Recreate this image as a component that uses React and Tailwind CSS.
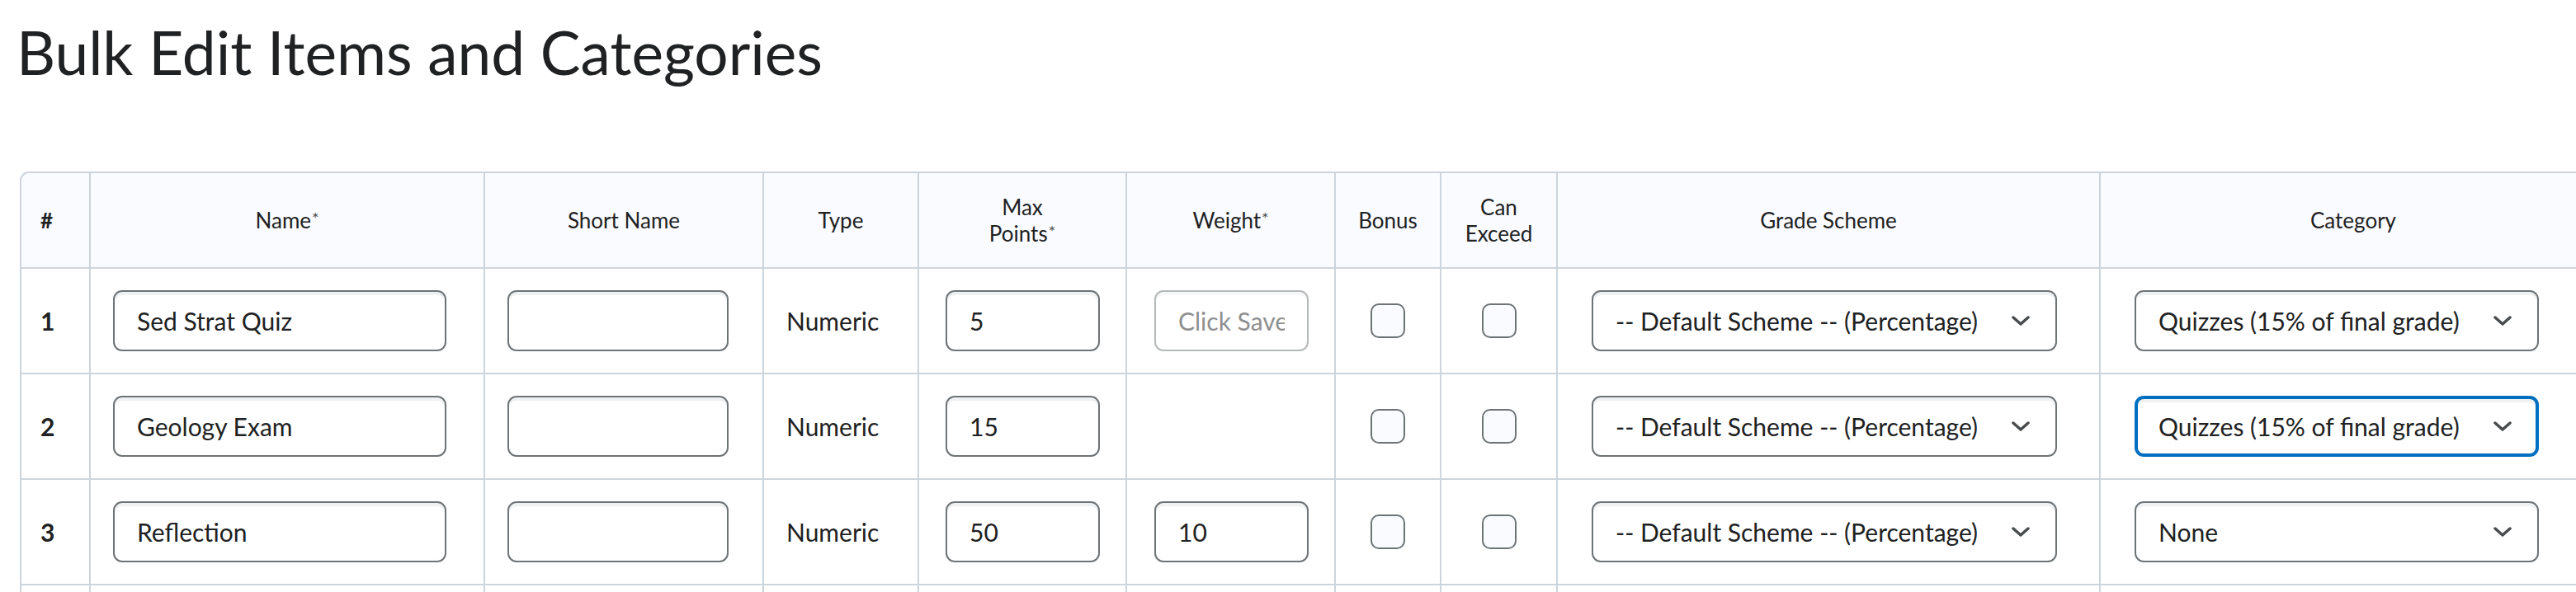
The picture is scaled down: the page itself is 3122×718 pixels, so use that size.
import React from 'react';

const items = [
    { id: 1, name: 'Sed Strat Quiz', shortName: '', type: 'Numeric', maxPoints: '5', weight: null, scheme: '-- Default Scheme -- (Percentage)', category: 'Quizzes (15% of final grade)' },
    { id: 2, name: 'Geology Exam', shortName: '', type: 'Numeric', maxPoints: '15', weight: 'none', scheme: '-- Default Scheme -- (Percentage)', category: 'Quizzes (15% of final grade)', focused: true },
    { id: 3, name: 'Reflection', shortName: '', type: 'Numeric', maxPoints: '50', weight: '10', scheme: '-- Default Scheme -- (Percentage)', category: 'None' },
];

const inputCls = 'h-[74px] border-2 border-[#6e7376] rounded-[11px] px-[27px] text-[30px] text-[#202122] bg-white outline-none shadow-[inset_0_4px_0_0_rgba(177,185,190,0.2)] font-[Lato,sans-serif]';

const Chevron = () => (
    <svg width="22" height="12" viewBox="0 0 22 12" fill="none">
        <polyline points="2,2 11,10 20,2" stroke="#494c4e" strokeWidth="3.5" strokeLinecap="round" strokeLinejoin="round" />
    </svg>
);

const Select = ({ value, width, focused }) => (
    <div
        className={`h-[74px] flex items-center justify-between rounded-[11px] bg-white text-[30px] shadow-[inset_0_4px_0_0_rgba(177,185,190,0.2)] ${focused ? 'border-4 border-[#006fbf] pl-[25px] pr-[29px]' : 'border-2 border-[#6e7376] pl-[27px] pr-[31px]'}`}
        style={{ width }}
    >
        <span className="whitespace-nowrap">{value}</span>
        <Chevron />
    </div>
);

const Checkbox = () => (
    <div className="w-[42px] h-[42px] border-2 border-[#6e7376] rounded-[10px] bg-[#f9fbff]" />
);

const Req = () => <span className="text-[20px] align-top relative top-[-3px] ml-[1px] text-[#494c4e]">*</span>;

const headCell = 'h-[118px] bg-[#f9fbff] border-t-2 border-b-2 border-r-2 border-[#cdd5dc] flex items-center justify-center text-center text-[26px] leading-[32px]';
const bodyCell = 'h-[128px] border-b-2 border-r-2 border-[#cdd5dc] flex items-center';

const App = () => {
    return (
        <div className="w-[3122px] h-[718px] overflow-hidden bg-white text-[#202122] font-[Lato,'Open_Sans',sans-serif]">
            <h1 className="pl-[20px] pt-[19px] text-[73px] leading-[89px] font-normal whitespace-nowrap">
                Bulk Edit Items and Categories
            </h1>

            <div className="mt-[100px] pl-[24px]">
                <div className="grid w-[3136px] grid-cols-[86px_478px_338px_188px_252px_253px_128px_141px_658px_614px]">
                    {/* header */}
                    <div className={`${headCell} border-l-2 rounded-tl-[11px] !justify-start pl-[23px] font-bold`}>#</div>
                    <div className={headCell}><span>Name<Req /></span></div>
                    <div className={headCell}>Short Name</div>
                    <div className={headCell}>Type</div>
                    <div className={headCell}><span>Max<br />Points<Req /></span></div>
                    <div className={headCell}><span>Weight<Req /></span></div>
                    <div className={headCell}>Bonus</div>
                    <div className={headCell}><span>Can<br />Exceed</span></div>
                    <div className={headCell}>Grade Scheme</div>
                    <div className={headCell}>Category</div>

                    {/* rows */}
                    {items.map(item => (
                        <React.Fragment key={item.id}>
                            <div className={`${bodyCell} border-l-2 pl-[23px] text-[30px] font-bold`}>{item.id}</div>
                            <div className={`${bodyCell} pl-[27px]`}>
                                <input className={`${inputCls} w-[404px]`} defaultValue={item.name} />
                            </div>
                            <div className={`${bodyCell} pl-[27px]`}>
                                <input className={`${inputCls} w-[268px]`} defaultValue={item.shortName} />
                            </div>
                            <div className={`${bodyCell} pl-[27px] text-[30px]`}>{item.type}</div>
                            <div className={`${bodyCell} pl-[32px]`}>
                                <input className={`${inputCls} w-[187px]`} defaultValue={item.maxPoints} />
                            </div>
                            <div className={`${bodyCell} pl-[33px]`}>
                                {item.weight === null && (
                                    <input
                                        disabled
                                        placeholder="Click Save"
                                        className={`${inputCls} w-[187px] opacity-50 placeholder:text-[#202122]`}
                                    />
                                )}
                                {item.weight && item.weight !== 'none' && (
                                    <input className={`${inputCls} w-[187px]`} defaultValue={item.weight} />
                                )}
                            </div>
                            <div className={`${bodyCell} justify-center`}><Checkbox /></div>
                            <div className={`${bodyCell} justify-center`}><Checkbox /></div>
                            <div className={`${bodyCell} pl-[41px]`}>
                                <Select value={item.scheme} width={564} />
                            </div>
                            <div className={`${bodyCell} pl-[41px]`}>
                                <Select value={item.category} width={490} focused={item.focused} />
                            </div>
                        </React.Fragment>
                    ))}

                    {/* next row, only its top edge shows */}
                    {Array.from({ length: 10 }).map((_, i) => (
                        <div key={i} className={`${bodyCell} ${i === 0 ? 'border-l-2' : ''}`} />
                    ))}
                </div>
            </div>
        </div>
    );
};

export default App;
